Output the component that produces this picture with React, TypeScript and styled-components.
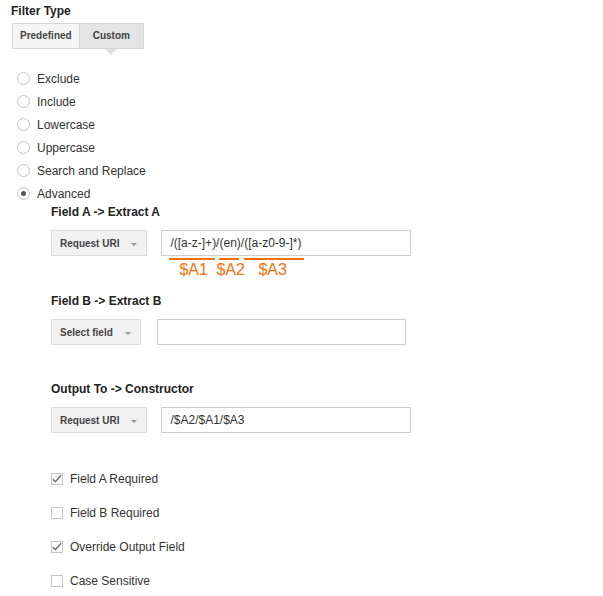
import styled, { createGlobalStyle } from 'styled-components';

const GlobalStyle = createGlobalStyle`
  body {
    margin: 0;
    background: #fff;
    font-family: "Liberation Sans", Arial, sans-serif;
    color: #333;
  }
`

const ORANGE = '#f7700a'

type Capture = { width: number; gap: number; label: string; labelOffset: number }

const captures: Capture[] = [
  { width: 46, gap: 0, label: '$A1', labelOffset: 10 },
  { width: 20, gap: 4, label: '$A2', labelOffset: -3 },
  { width: 60, gap: 5, label: '$A3', labelOffset: 14 },
]

const filterTypes = ['Exclude', 'Include', 'Lowercase', 'Uppercase', 'Search and Replace', 'Advanced']

const options = [
  { label: 'Field A Required', checked: true },
  { label: 'Field B Required', checked: false },
  { label: 'Override Output Field', checked: true },
  { label: 'Case Sensitive', checked: false },
]

export default function App() {
  return (
    <Page>
      <GlobalStyle />
      <Title>Filter Type</Title>
      <Tabs>
        <Tab>Predefined</Tab>
        <Tab $active>Custom</Tab>
      </Tabs>

      <RadioList>
        {filterTypes.map((t) => (
          <RadioRow key={t}>
            <Radio $checked={t === 'Advanced'} />
            <span>{t}</span>
          </RadioRow>
        ))}
      </RadioList>

      <Advanced>
        <FieldLabel>Field A -&gt; Extract A</FieldLabel>
        <FieldRow>
          <SelectButton>Request URI<Caret /></SelectButton>
          <InputWrap>
            <TextBox $width={250}>/([a-z-]+)/(en)/([a-z0-9-]*)</TextBox>
            <Captures>
              {captures.map((c) => (
                <CaptureGroup key={c.label} style={{ width: c.width, marginLeft: c.gap }}>
                  <Underline />
                  <CaptureLabel style={{ marginLeft: c.labelOffset }}>{c.label}</CaptureLabel>
                </CaptureGroup>
              ))}
            </Captures>
          </InputWrap>
        </FieldRow>

        <FieldLabel $top={15}>Field B -&gt; Extract B</FieldLabel>
        <FieldRow $gap={16}>
          <SelectButton>Select field<Caret /></SelectButton>
          <TextBox $width={249} />
        </FieldRow>

        <FieldLabel $top={37}>Output To -&gt; Constructor</FieldLabel>
        <FieldRow>
          <SelectButton>Request URI<Caret /></SelectButton>
          <TextBox $width={250}>/$A2/$A1/$A3</TextBox>
        </FieldRow>

        <CheckList>
          {options.map((o) => (
            <CheckRow key={o.label}>
              <CheckBox>
                {o.checked && (
                  <svg width="12" height="12" viewBox="0 0 12 12">
                    <path d="M2 6.2 L4.8 9 L11 2" fill="none" stroke="#6d6d6d" strokeWidth="1.6" />
                  </svg>
                )}
              </CheckBox>
              <span>{o.label}</span>
            </CheckRow>
          ))}
        </CheckList>
      </Advanced>
    </Page>
  )
}

const Page = styled.div`
  padding: 4px 11px 0;
  font-size: 12px;
`
const Title = styled.div`
  font-weight: bold;
  font-size: 12px;
  line-height: 14px;
  color: #222;
`
const Tabs = styled.div`
  display: inline-flex;
  margin: 5px 0 0 1px;
  border: 1px solid #d6d6d6;
`
const Tab = styled.div<{ $active?: boolean }>`
  position: relative;
  height: 24px;
  line-height: 24px;
  padding: 0 ${(p) => (p.$active ? 13 : 7)}px;
  font-size: 10px;
  font-weight: bold;
  color: #444;
  background: ${(p) => (p.$active ? '#e4e4e4' : '#f5f5f5')};
  & + & {
    border-left: 1px solid #d6d6d6;
  }
  ${(p) =>
    p.$active &&
    `
    &::after {
      content: '';
      position: absolute;
      left: 50%;
      bottom: -7px;
      margin-left: -6px;
      border-left: 6px solid transparent;
      border-right: 6px solid transparent;
      border-top: 6px solid #e0e0e0;
    }
  `}
`
const RadioList = styled.div`
  margin-top: 18px;
`
const RadioRow = styled.div`
  display: flex;
  align-items: center;
  height: 23px;
  padding-left: 6px;
  gap: 7px;
  color: #333;
`
const Radio = styled.span<{ $checked?: boolean }>`
  width: 11px;
  height: 11px;
  border: 1px solid #c4c4c4;
  border-radius: 50%;
  display: inline-flex;
  align-items: center;
  justify-content: center;
  background: #fff;
  &::after {
    content: '';
    width: 5px;
    height: 5px;
    border-radius: 50%;
    background: ${(p) => (p.$checked ? '#555' : 'transparent')};
  }
`
const Advanced = styled.div`
  padding-left: 40px;
`
const FieldLabel = styled.div<{ $top?: number }>`
  margin-top: ${(p) => p.$top ?? 0}px;
  font-weight: bold;
  font-size: 12px;
  line-height: 14px;
  color: #222;
`
const FieldRow = styled.div<{ $gap?: number }>`
  display: flex;
  align-items: flex-start;
  gap: ${(p) => p.$gap ?? 14}px;
  margin-top: 11px;
`
const SelectButton = styled.div`
  display: inline-flex;
  align-items: center;
  height: 24px;
  padding: 0 9px 0 8px;
  background: #f1f1f1;
  border: 1px solid #dcdcdc;
  font-size: 10px;
  font-weight: bold;
  color: #444;
  white-space: nowrap;
`
const Caret = styled.span`
  margin-left: 12px;
  margin-top: 2px;
  border-left: 3px solid transparent;
  border-right: 3px solid transparent;
  border-top: 3px solid #999;
`
const InputWrap = styled.div`
  display: flex;
  flex-direction: column;
`
const TextBox = styled.div<{ $width: number }>`
  box-sizing: border-box;
  width: ${(p) => p.$width}px;
  height: 26px;
  line-height: 24px;
  padding: 0 8px;
  border: 1px solid #cfcfcf;
  font-size: 12px;
  color: #333;
`
const Captures = styled.div`
  display: flex;
  padding-left: 8px;
  margin-top: 2px;
`
const CaptureGroup = styled.div`
  display: flex;
  flex-direction: column;
`
const Underline = styled.div`
  height: 2px;
  background: ${ORANGE};
`
const CaptureLabel = styled.div`
  color: ${ORANGE};
  font-size: 16px;
  line-height: 18px;
  margin-top: 1px;
  white-space: nowrap;
`
const CheckList = styled.div`
  margin-top: 29px;
`
const CheckRow = styled.div`
  display: flex;
  align-items: center;
  gap: 7px;
  height: 34px;
  color: #333;
`
const CheckBox = styled.span`
  box-sizing: border-box;
  width: 12px;
  height: 12px;
  border: 1px solid #c6c6c6;
  display: inline-flex;
  align-items: flex-start;
  justify-content: flex-start;
  overflow: visible;
  svg {
    margin: -1px 0 0 -1px;
  }
`
